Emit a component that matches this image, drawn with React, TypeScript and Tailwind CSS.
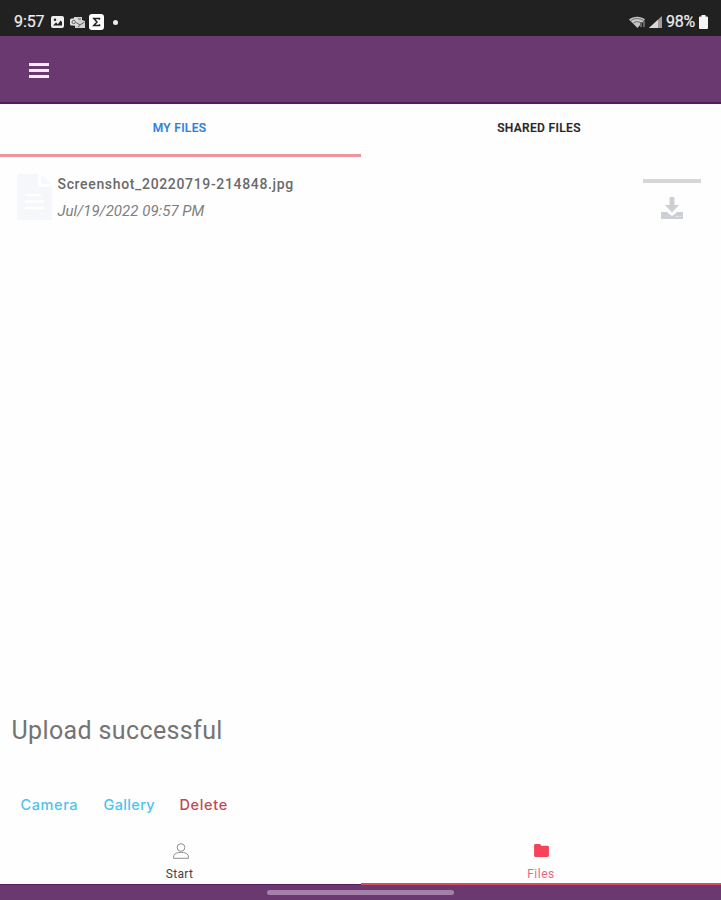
import React from 'react';

const StatusBar: React.FC = () => (
  <div className="flex h-9 shrink-0 items-center justify-between bg-[#212121] pl-[14px] pr-[13px] pt-2 text-[#eeeeee]">
    <div className="flex items-center">
      <span className="w-[37px] whitespace-nowrap text-[16px] leading-5 tracking-[-0.1px] [-webkit-text-stroke:0.2px]">9:57</span>
      <svg className="h-3 w-[13px]" viewBox="0 0 13 12">
        <rect width="13" height="12" rx="2" fill="currentColor" />
        <path d="M2 9.5L5 6.5l2 1.7 2.5-3.7L11 6v3.5z" fill="#212121" />
        <circle cx="4" cy="3.8" r="1.2" fill="#212121" />
      </svg>
      <svg className="ml-[6px] h-3 w-[15px]" viewBox="0 0 15 12">
        <path d="M4 1h8v3l3 1v7H5V9.500H3z" fill="#d2d2d2" />
        <rect x="0" y="2.500" width="7.500" height="7" rx="1.500" fill="#e2e2e2" />
        <circle cx="3.700" cy="6" r="1.700" fill="none" stroke="#555555" strokeWidth=".9" />
        <path d="M6 6.500l4 2.500 4.500-3M8 3h3M8 11l2-1.500" fill="none" stroke="#555555" strokeWidth=".9" />
      </svg>
      <svg className="ml-1 h-4 w-[15px]" viewBox="0 0 15 16">
        <rect width="15" height="16" rx="3" fill="#ffffff" />
        <path d="M10.500 5.700V4.500H4.800L8 8l-3.200 3.500h5.700v-1.200" fill="none" stroke="#212121" strokeWidth="1.500" />
      </svg>
      <span className="ml-[9px] size-[5px] rounded-full bg-[#eeeeee]" />
    </div>
    <div className="flex items-center">
      <svg className="h-3 w-[17px]" viewBox="0 0 17 12">
        <path d="M0 3.500C4.500-.3 12-.3 16 3.500L8.500 12z" fill="#c4c4c4" />
        <path d="M2 4.500c3.500-2.600 9-2.600 12.500 0M4.500 7c2.300-1.700 5.200-1.700 7.500 0" fill="none" stroke="#555555" strokeWidth=".8" />
        <path d="M12 11V6M15 5v6" fill="none" stroke="#212121" strokeWidth="2" />
        <path d="M12 11V6M15 5v6" stroke="#aaaaaa" strokeWidth="1" />
      </svg>
      <svg className="ml-[3px] h-3 w-[13px]" viewBox="0 0 13 12">
        <path d="M0 12L13 0v12z" fill="#9d9d9d" />
        <path d="M0 12l9-8.300V12z" fill="#d8d8d8" />
      </svg>
      <span className="ml-1 w-[32px] whitespace-nowrap text-[16px] leading-5 tracking-[-0.3px] [-webkit-text-stroke:0.2px]">98%</span>
      <svg className="ml-[1px] h-[14px] w-[9px]" viewBox="0 0 9 14">
        <path d="M2.500 0h4v1.500H8q1 0 1 1V13q0 1-1 1H1q-1 0-1-1V2.500q0-1 1-1h1.500z" fill="#f5f5f5" />
      </svg>
    </div>
  </div>
);

const AppBar: React.FC = () => (
  <header className="flex h-[68px] shrink-0 items-center border-b-2 border-[#571b60] bg-[#69396f] pl-[29px] pt-[2px]">
    <button aria-label="Menu" className="flex h-[15px] w-[20px] flex-col justify-between">
      <span className="h-[3px] w-full bg-[#f8e8f9]" />
      <span className="h-[3px] w-full bg-[#f8e8f9]" />
      <span className="h-[3px] w-full bg-[#f8e8f9]" />
    </button>
  </header>
);

const Tabs: React.FC = () => (
  <div className="flex h-[53px] shrink-0 text-[12px] leading-4 font-medium">
    <button className="flex w-[361px] justify-center border-b-[3px] border-[#ec959b] pt-4 pr-[2px] text-[#2a80e0]">
      <span className="tracking-[0.3px] [-webkit-text-stroke:0.2px]">MY FILES</span>
    </button>
    <button className="flex flex-1 justify-center pt-4 pr-1 text-[#252525]">
      <span className="tracking-[0.33px] [-webkit-text-stroke:0.2px]">SHARED FILES</span>
    </button>
  </div>
);

const FileRow: React.FC = () => (
  <div className="flex h-[70px] shrink-0 pt-[17px] pl-[17px] pr-5">
    <svg className="h-[46px] w-[35px]" viewBox="0 0 35 46">
      <path d="M2 0h19v11q0 2 2 2h12v31q0 2-2 2H2q-2 0-2-2V2q0-2 2-2z" fill="#f5f7fa" />
      <path d="M24 0l11 10H25q-1 0-1-1z" fill="#f6f8fb" />
      <path d="M8 21h16M8 27.500h19M8 34h19" stroke="#ffffff" strokeWidth="2.500" />
    </svg>
    <div className="ml-[5px] flex-1">
      <div className="pl-[0.5px] text-[14px] leading-5 font-medium tracking-[0.66px] text-[#6a6a6a]">
        Screenshot_20220719-214848.jpg
      </div>
      <div className="mt-[7px] pl-[0.5px] text-[15px] leading-5 italic tracking-[0.03px] text-[#808080]">Jul/19/2022 09:57 PM</div>
    </div>
    <div className="flex w-[58px] flex-col items-center pt-[5px]">
      <div className="h-1 w-full bg-[#d6d6d8]" />
      <svg className="mt-[14px] h-[22px] w-[22px]" viewBox="0 0 22 22">
        <path d="M0 15h6l5 4 5-4h6v7H0z" fill="#ccd0d5" />
        <path d="M8.500 0h5v8H18l-7 7.500L4 8h4.500z" fill="#ccd0d5" />
        <path d="M15 19.500h2M18.500 19.500h1" stroke="#eef0f2" strokeWidth="1" />
      </svg>
    </div>
  </div>
);

const Actions: React.FC = () => (
  <div className="mt-[48px] flex h-5 pl-[20.5px] font-['Inter','Liberation_Sans',sans-serif] text-[14.5px] leading-5 font-medium">
    <button className="w-[83px] text-left tracking-[0.6px] text-[#4dc3ed]">Camera</button>
    <button className="w-[76px] text-left tracking-[0.35px] text-[#4dc3ed]">Gallery</button>
    <button className="text-left tracking-[0.65px] text-[#bf4a52]">Delete</button>
  </div>
);

const BottomNav: React.FC = () => (
  <nav className="mt-[19px] flex h-[51px] shrink-0 text-[12px] leading-4">
    <button className="flex w-[361px] flex-col items-center border-b border-[#571b60] pt-[9px] text-[#444444]">
      <svg className="h-[16px] w-[16px]" viewBox="0 0 16 16" fill="none" stroke="#8f8f8f" strokeWidth="1">
        <circle cx="8" cy="4.500" r="3.800" />
        <path d="M.6 15.300v-2.500C1.300 10.500 4.600 9.300 8 9.300s6.700 1.200 7.400 3.500v2.500z" />
      </svg>
      <span className="mt-[7px] pr-[2px] tracking-[0.35px]">Start</span>
    </button>
    <button className="flex flex-1 flex-col items-center border-b-2 border-[#d84a64] pt-[10px] text-[#e66a7d]">
      <svg className="h-[13px] w-[15px]" viewBox="0 0 16 14">
        <path d="M1.500 0h4.800l1.500 2h6.700Q16 2 16 3.500v9q0 1.500-1.500 1.500h-13Q0 14 0 12.500v-11Q0 0 1.500 0z" fill="#f5435a" />
      </svg>
      <span className="mt-[9px] tracking-[0.5px]">Files</span>
    </button>
  </nav>
);

const App: React.FC = () => (
  <div className="flex h-[900px] w-[721px] flex-col overflow-hidden bg-[#fefefe] font-['Roboto','Liberation_Sans',sans-serif]">
    <StatusBar />
    <AppBar />
    <Tabs />
    <FileRow />
    <main className="flex flex-1 flex-col justify-end">
      <p className="pl-[11.5px] text-[25px] leading-8 tracking-[0.37px] text-[#747474]">Upload successful</p>
      <Actions />
      <BottomNav />
    </main>
    <div className="flex h-[15px] shrink-0 justify-center bg-[#69396f] pt-[5px]">
      <span className="h-[5px] w-[187px] rounded-full bg-[#a580ab]" />
    </div>
  </div>
);

export default App;
